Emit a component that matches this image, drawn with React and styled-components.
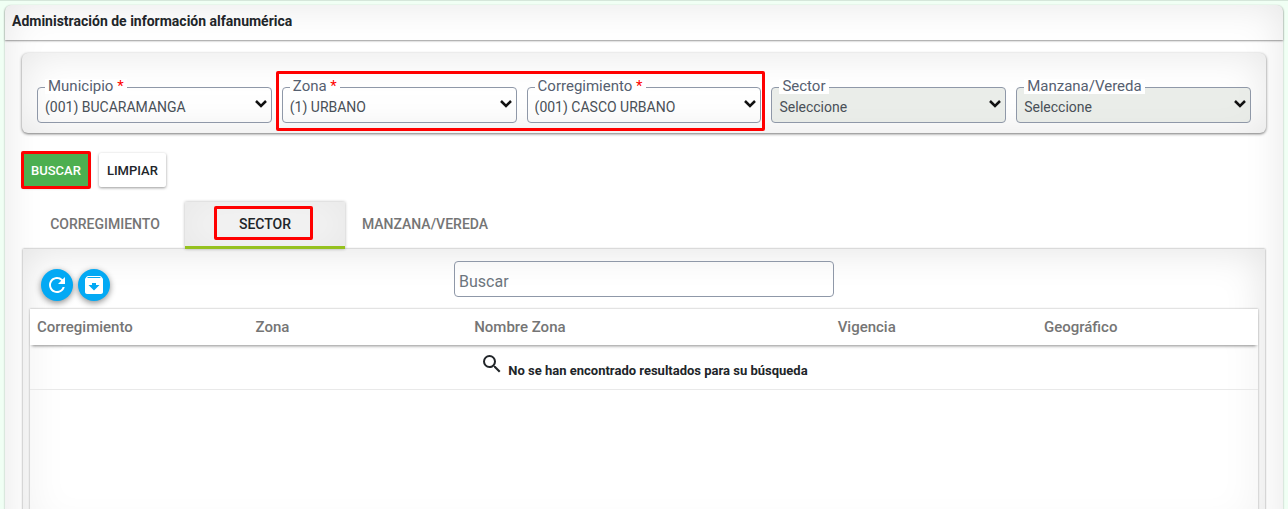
import React from "react";
import styled, { createGlobalStyle, css } from "styled-components";
import { MdArchive, MdRefresh, MdSearch } from "react-icons/md";

const GlobalStyle = createGlobalStyle`
  *, *::before, *::after { box-sizing: border-box; }
  body {
    margin: 0;
    font-family: Roboto, "Liberation Sans", sans-serif;
    font-size: 14px;
    color: #212529;
    background: #f0fff4;
  }
  button, input, select { font-family: inherit; margin: 0; }
`;

const Page = styled.div`
  height: 100vh;
  overflow-y: auto;
  scrollbar-width: none;
  padding: 4px 5px;
  border-top: 1px solid #d5e6da;
`;

const Card = styled.main`
  border-radius: 6px;
  background: #fff;
  box-shadow: inset 0 0 40px rgba(0, 0, 0, 0.1), 0 1px 2px rgba(0, 0, 0, 0.35);
`;

const Header = styled.header`
  padding: 6px 7px 9px;
  border-radius: 6px 6px 0 0;
  box-shadow: 0 1px 2px rgba(0, 0, 0, 0.4);
`;

const Title = styled.h1`
  margin: 0;
  font-size: 14px;
  line-height: 20px;
  font-weight: 700;
`;

const Content = styled.div`
  padding: 13px 17px 16px;
`;

const highlight = css`
  content: "";
  position: absolute;
  border: 3px solid #f00;
  border-radius: 2px;
  pointer-events: none;
`;

const Filters = styled.form`
  display: grid;
  grid-template-columns: repeat(5, minmax(0, 1fr));
  gap: 10px;
  padding: 34px 15px 10px;
  border-radius: 6px;
  background: #fff;
  box-shadow: inset 0 0 40px rgba(0, 0, 0, 0.1), 0 1px 3px rgba(0, 0, 0, 0.55);
`;

const MarkedFields = styled.div`
  position: relative;
  grid-column: span 2;
  display: grid;
  grid-template-columns: repeat(2, minmax(0, 1fr));
  gap: 10px;
  &::after {
    ${highlight}
    inset: -16px -4px -8px -6px;
  }
`;

const FieldBox = styled.div`
  position: relative;
`;

const FieldLabel = styled.label`
  position: absolute;
  left: 8px;
  top: -8px;
  padding: 0 3px;
  font-size: 15px;
  line-height: 15px;
  color: #566070;
  background: #fff;
`;

const Required = styled.span`
  color: #f00;
`;

const Select = styled.select`
  display: block;
  width: 100%;
  height: 36px;
  padding: 4px 28px 0 7px;
  appearance: none;
  border: 1px solid #8f98a8;
  border-radius: 4px;
  font-size: 14px;
  color: #495057;
  background: transparent;
  opacity: 1;
  &:disabled {
    background: rgba(225, 229, 224, 0.7);
  }
`;

const Chevron = styled.svg`
  position: absolute;
  right: 4px;
  top: 12px;
  width: 14px;
  height: 10px;
  pointer-events: none;
`;

const Actions = styled.div`
  display: flex;
  gap: 10px;
  padding: 20px 1px 0;
`;

const ActionButton = styled.button`
  position: relative;
  height: 34px;
  padding: 0 8px;
  border: 0;
  border-radius: 2px;
  font-size: 13px;
  font-weight: 500;
  color: ${(p) => (p.$primary ? "#fff" : "#212529")};
  background: ${(p) => (p.$primary ? "#4caf50" : "#fff")};
  box-shadow: 0 1px 3px rgba(0, 0, 0, 0.4);
  ${(p) =>
    p.$primary &&
    css`
      &::after {
        ${highlight}
        inset: -2px;
      }
    `}
`;

const Tabs = styled.div`
  display: flex;
  padding: 15px 3px 0;
`;

const Tab = styled.button`
  position: relative;
  width: 160px;
  height: 47px;
  padding: 0 0 4px;
  border: 0;
  font-size: 14px;
  font-weight: 500;
  color: #757575;
  background: transparent;
  ${(p) =>
    p["aria-selected"] &&
    css`
      padding: 0;
      color: #212529;
      background: #f5f5f5;
      border-bottom: 3px solid #95c11f;
      box-shadow: inset 0 0 40px rgba(0, 0, 0, 0.06), 0 0 3px rgba(0, 0, 0, 0.3);
      &::after {
        ${highlight}
        inset: 4px 32px 6px 29px;
      }
    `}
`;

const Panel = styled.section`
  margin: 0 1px;
  padding: 12px 7px 8px;
  background: #fff;
  box-shadow: inset 0 0 40px rgba(0, 0, 0, 0.12), 0 0 2px rgba(0, 0, 0, 0.45);
`;

const Toolbar = styled.div`
  display: grid;
  grid-template-columns: 1fr 380px 1fr;
  align-items: start;
  padding-bottom: 12px;
`;

const IconButtons = styled.div`
  display: flex;
  gap: 5px;
  padding: 8px 11px 0;
  height: 36px;
`;

const RoundButton = styled.button`
  display: grid;
  flex: none;
  place-items: center;
  width: 32px;
  height: 32px;
  padding: 0;
  border: 0;
  border-radius: 50%;
  color: #fff;
  background: #03a9f4;
  box-shadow: 0 2px 6px rgba(0, 0, 0, 0.45);
`;

const SearchInput = styled.input`
  width: 100%;
  height: 36px;
  padding: 4px 4px 0;
  border: 1px solid #8f98a8;
  border-radius: 4px;
  font-size: 16px;
  color: #495057;
  background: transparent;
  &::placeholder {
    color: #6c757d;
    opacity: 1;
  }
`;

const TableWrap = styled.div`
  min-height: 220px;
  background: #fff;
  box-shadow: inset 0 0 40px rgba(0, 0, 0, 0.06), 0 0 2px rgba(0, 0, 0, 0.35);
`;

const Table = styled.table`
  width: 100%;
  table-layout: fixed;
  border-collapse: collapse;
`;

const Head = styled.thead`
  background: #fff;
  box-shadow: 0 3px 3px -2px rgba(0, 0, 0, 0.45);
`;

const HeadCell = styled.th`
  width: ${(p) => p.$width};
  height: 36px;
  padding: 0 7px;
  text-align: left;
  font-size: 15px;
  font-weight: 500;
  color: #757575;
`;

const EmptyCell = styled.td`
  height: 44px;
  padding: 6px 0 0;
  border-bottom: 1px solid #e9e9e9;
`;

const EmptyMessage = styled.div`
  display: flex;
  justify-content: center;
  gap: 4px;
  font-size: 13px;
  font-weight: 700;
  line-height: 38px;
  height: 36px;
`;

const columns = [
  ["Corregimiento", "17.8%"],
  ["Zona", "17.8%"],
  ["Nombre Zona", "29.6%"],
  ["Vigencia", "16.8%"],
  ["Geográfico", "18%"],
];

function Field({ id, label, value, required, disabled }) {
  return (
    <FieldBox>
      <Select id={id} disabled={disabled} required={required}>
        <option>{value}</option>
      </Select>
      <FieldLabel htmlFor={id}>
        {label}
        {required && <Required> *</Required>}
      </FieldLabel>
      <Chevron viewBox="0 0 14 10" aria-hidden="true">
        <path d="M2 2l5 5 5-5" fill="none" stroke="#111" strokeWidth="2.5" />
      </Chevron>
    </FieldBox>
  );
}

export default function App() {
  return (
    <Page>
      <GlobalStyle />
      <Card>
        <Header>
          <Title>Administración de información alfanumérica</Title>
        </Header>
        <Content>
          <Filters>
            <Field id="municipio" label="Municipio" value="(001) BUCARAMANGA" required />
            <MarkedFields>
              <Field id="zona" label="Zona" value="(1) URBANO" required />
              <Field id="corregimiento" label="Corregimiento" value="(001) CASCO URBANO" required />
            </MarkedFields>
            <Field id="sector" label="Sector" value="Seleccione" disabled />
            <Field id="manzana" label="Manzana/Vereda" value="Seleccione" disabled />
          </Filters>
          <Actions>
            <ActionButton type="button" $primary>BUSCAR</ActionButton>
            <ActionButton type="button">LIMPIAR</ActionButton>
          </Actions>
          <Tabs role="tablist">
            <Tab role="tab" aria-selected={false}>CORREGIMIENTO</Tab>
            <Tab role="tab" aria-selected={true}>SECTOR</Tab>
            <Tab role="tab" aria-selected={false}>MANZANA/VEREDA</Tab>
          </Tabs>
          <Panel>
            <Toolbar>
              <IconButtons>
                <RoundButton type="button" aria-label="Actualizar">
                  <MdRefresh size={24} />
                </RoundButton>
                <RoundButton type="button" aria-label="Exportar">
                  <MdArchive size={24} />
                </RoundButton>
              </IconButtons>
              <SearchInput type="text" placeholder="Buscar" aria-label="Buscar" />
            </Toolbar>
            <TableWrap>
              <Table>
                <Head>
                  <tr>
                    {columns.map(([name, width]) => (
                      <HeadCell key={name} $width={width} scope="col">{name}</HeadCell>
                    ))}
                  </tr>
                </Head>
                <tbody>
                  <tr>
                    <EmptyCell colSpan={5}>
                      <EmptyMessage>
                        <MdSearch size={24} />
                        <span>No se han encontrado resultados para su búsqueda</span>
                      </EmptyMessage>
                    </EmptyCell>
                  </tr>
                </tbody>
              </Table>
            </TableWrap>
          </Panel>
        </Content>
      </Card>
    </Page>
  );
}
